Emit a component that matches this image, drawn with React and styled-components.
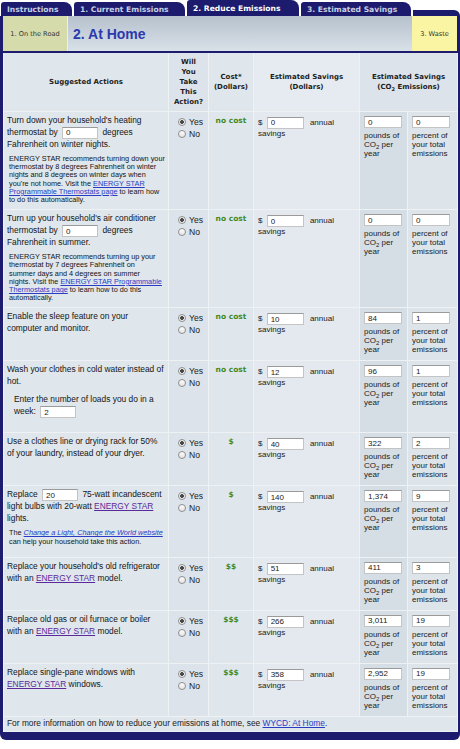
import React from 'react'
import styled, { createGlobalStyle } from 'styled-components'

const NAVY = '#1c1b6e'

const GlobalStyle = createGlobalStyle`
  body {
    margin: 0;
    background: #ffffff;
    font-family: "Liberation Sans", Arial, sans-serif;
  }
`

const tabs = [
  { label: 'Instructions', w: 71 },
  { label: '1. Current Emissions', w: 111 },
  { label: '2. Reduce Emissions', w: 112, active: true },
  { label: '3. Estimated Savings', w: 110 },
]

const rows = [
  { id: 'heat', cost: 'no cost', dollars: '0', pounds: '0', percent: '0' },
  { id: 'ac', cost: 'no cost', dollars: '0', pounds: '0', percent: '0' },
  { id: 'sleep', cost: 'no cost', dollars: '10', pounds: '84', percent: '1' },
  { id: 'wash', cost: 'no cost', dollars: '12', pounds: '96', percent: '1' },
  { id: 'line', cost: '$', dollars: '40', pounds: '322', percent: '2' },
  { id: 'bulbs', cost: '$', dollars: '140', pounds: '1,374', percent: '9' },
  { id: 'fridge', cost: '$$', dollars: '51', pounds: '411', percent: '3' },
  { id: 'furnace', cost: '$$$', dollars: '266', pounds: '3,011', percent: '19' },
  { id: 'windows', cost: '$$$', dollars: '358', pounds: '2,952', percent: '19' },
]

function ActionText({ id }) {
  switch (id) {
    case 'heat':
      return (
        <>
          Turn down your household's heating thermostat by <Field $w={36} defaultValue="0" /> degrees Fahrenheit on winter nights.
          <Note>
            ENERGY STAR recommends turning down your thermostat by 8 degrees Fahrenheit on winter nights and 8 degrees on winter days when you're not home. Visit the <Link href="#">ENERGY STAR Programmable Thermostats page</Link> to learn how to do this automatically.
          </Note>
        </>
      )
    case 'ac':
      return (
        <>
          Turn up your household's air conditioner thermostat by <Field $w={36} defaultValue="0" /> degrees Fahrenheit in summer.
          <Note>
            ENERGY STAR recommends turning up your thermostat by 7 degrees Fahrenheit on<br />
            summer days and 4 degrees on summer<br />
            nights. Visit the <Link href="#">ENERGY STAR Programmable Thermostats page</Link> to learn how to do this automatically.
          </Note>
        </>
      )
    case 'sleep':
      return <>Enable the sleep feature on your computer and monitor.</>
    case 'wash':
      return (
        <>
          Wash your clothes in cold water instead of hot.
          <Indent>
            Enter the number of loads you do in a week: <Field $w={36} defaultValue="2" />
          </Indent>
        </>
      )
    case 'line':
      return <>Use a clothes line or drying rack for 50% of your laundry, instead of your dryer.</>
    case 'bulbs':
      return (
        <>
          Replace <Field $w={36} defaultValue="20" /> 75-watt incandescent light bulbs with 20-watt <Link href="#" $visited>ENERGY STAR</Link> lights.
          <Note $below={6}>
            The <Link href="#" $italic>Change a Light, Change the World website</Link> can help your household take this action.
          </Note>
        </>
      )
    case 'fridge':
      return <>Replace your household's old refrigerator with an <Link href="#" $visited>ENERGY STAR</Link> model.</>
    case 'furnace':
      return <>Replace old gas or oil furnace or boiler with an <Link href="#" $visited>ENERGY STAR</Link> model.</>
    default:
      return <>Replace single-pane windows with <Link href="#" $visited>ENERGY STAR</Link> windows.</>
  }
}

export default function App() {
  return (
    <Page>
      <GlobalStyle />
      <TabBar>
        {tabs.map(t => (
          <Tab key={t.label} $w={t.w} $active={t.active}>{t.label}</Tab>
        ))}
        <TabFill />
      </TabBar>
      <Frame>
        <SubNav>
          <SideStep $tone="#d5dbab">1. On the Road</SideStep>
          <Title>2. At Home</Title>
          <SideStep $tone="#faf5a2" $right>3. Waste</SideStep>
        </SubNav>
        <Table>
          <colgroup>
            <col style={{ width: 165 }} />
            <col style={{ width: 40 }} />
            <col style={{ width: 45 }} />
            <col style={{ width: 106 }} />
            <col style={{ width: 48 }} />
            <col style={{ width: 50 }} />
          </colgroup>
          <thead>
            <tr>
              <Head $tone="#dfe6ec">Suggested Actions</Head>
              <Head $tone="#dce3ea">Will<br />You<br />Take<br />This<br />Action?</Head>
              <Head $tone="#dfe6ec">Cost*<br />(Dollars)</Head>
              <Head $tone="#e5ebf0">Estimated Savings<br />(Dollars)</Head>
              <Head $tone="#dce3ea" colSpan={2}>Estimated Savings<br />(CO<sub>2</sub> Emissions)</Head>
            </tr>
          </thead>
          <tbody>
            {rows.map(r => (
              <tr key={r.id}>
                <ActionCell><ActionText id={r.id} /></ActionCell>
                <Cell $tone="#dce3ea">
                  <Choice><Radio type="radio" name={r.id} defaultChecked />Yes</Choice>
                  <Choice><Radio type="radio" name={r.id} />No</Choice>
                </Cell>
                <CostCell>{r.cost}</CostCell>
                <Cell $tone="#e3e9ee">
                  <Line>$ <Field $w={37} defaultValue={r.dollars} $gap /> annual</Line>
                  savings
                </Cell>
                <Cell $tone="#d5dde5">
                  <Field $w={38} defaultValue={r.pounds} $block />
                  <Small>pounds of<br />CO<sub>2</sub> per<br />year</Small>
                </Cell>
                <Cell $tone="#dde4ea">
                  <Field $w={38} defaultValue={r.percent} $block />
                  <Small>percent of<br />your total<br />emissions</Small>
                </Cell>
              </tr>
            ))}
            <tr>
              <Footer colSpan={6}>
                For more information on how to reduce your emissions at home, see <Link href="#">WYCD: At Home</Link>.
              </Footer>
            </tr>
          </tbody>
        </Table>
      </Frame>
    </Page>
  )
}

const Page = styled.div`
  width: 460px;
`

const TabBar = styled.div`
  display: flex;
  align-items: flex-end;
  gap: 2px;
  height: 16px;
  padding-left: 1px;
`

const Tab = styled.div`
  width: ${p => p.$w}px;
  height: ${p => (p.$active ? 16 : 14)}px;
  box-sizing: border-box;
  padding-left: 6px;
  display: flex;
  align-items: center;
  background: ${NAVY};
  color: ${p => (p.$active ? '#ffffff' : '#c6cee2')};
  border-radius: 3px 8px 0 0;
  font: bold 7.6px "DejaVu Sans", Verdana, sans-serif;
  white-space: nowrap;
`

const TabFill = styled.div`
  flex: 1;
  height: 6px;
  background: ${NAVY};
  border-radius: 0 7px 0 0;
`

const Frame = styled.div`
  border-left: 3px solid ${NAVY};
  border-right: 3px solid ${NAVY};
  border-bottom: 8px solid ${NAVY};
  border-radius: 0 0 6px 6px;
  background: #dfe6ec;
`

const SubNav = styled.div`
  display: flex;
  align-items: stretch;
  height: 35px;
  background: linear-gradient(#b6c1cd, #d9e1e8);
  border-bottom: 2px solid ${NAVY};
`

const SideStep = styled.div`
  width: ${p => (p.$right ? 45 : 64)}px;
  background: ${p => p.$tone};
  display: flex;
  align-items: center;
  justify-content: center;
  font: 6.6px "DejaVu Sans", Verdana, sans-serif;
  color: #333;
  border-right: ${p => (p.$right ? 'none' : '1px solid #eef0dc')};
`

const Title = styled.div`
  flex: 1;
  display: flex;
  align-items: center;
  padding-left: 5px;
  font: bold 14px "Liberation Sans", Arial, sans-serif;
  color: #2c3aad;
`

const Table = styled.table`
  width: 454px;
  table-layout: fixed;
  border-collapse: collapse;
  sub {
    font-size: 6px;
    line-height: 0;
    vertical-align: -2px;
  }
`

const Head = styled.th`
  background: ${p => p.$tone};
  height: 58px;
  padding: 0 2px;
  border: 1px solid #eef2f5;
  border-top: none;
  font: bold 7px/10px "DejaVu Sans", Verdana, sans-serif;
  color: #1e1e1e;
  text-align: center;
  vertical-align: middle;
  sub { font-size: 5px; }
`

const Cell = styled.td`
  background: ${p => p.$tone};
  border: 1px solid #eef2f5;
  padding: 4px 4px 6px;
  vertical-align: top;
  font: 8px/9px "Liberation Sans", Arial, sans-serif;
  color: #222;
`

const ActionCell = styled(Cell)`
  background: #dfe6ec;
  padding: 2px 3px 5px 3px;
  font-size: 8.4px;
  line-height: 12px;
  color: #151515;
`

const CostCell = styled(Cell)`
  background: #dfe6ec;
  text-align: center;
  padding-top: 4px;
  font: bold 7.5px/10px "DejaVu Sans", Verdana, sans-serif;
  color: #3f8a1f;
`

const Footer = styled(Cell)`
  background: #dfe6ec;
  padding: 1px 3px 2px;
  font-size: 8.4px;
  line-height: 11px;
`

const Note = styled.div`
  margin: 5px 0 ${p => p.$below || 0}px;
  padding-left: 2px;
  font-size: 7.3px;
  line-height: 8.2px;
`

const Indent = styled.div`
  margin: 6px 0 10px;
  padding-left: 7px;
`

const Link = styled.a`
  color: ${p => (p.$visited ? '#5b2a9a' : '#2a3cc4')};
  font-style: ${p => (p.$italic ? 'italic' : 'normal')};
  text-decoration: underline;
`

const Field = styled.input`
  display: ${p => (p.$block ? 'block' : 'inline-block')};
  width: ${p => p.$w}px;
  height: 12px;
  box-sizing: border-box;
  margin: ${p => (p.$block ? '0 0 3px' : p.$gap ? '-2px 4px -2px 2px' : '-2px 2px')};
  padding: 0 3px;
  border: 1px solid #c4c4c4;
  border-top-color: #9a9a9a;
  background: #fff;
  font: 8px "Liberation Sans", Arial, sans-serif;
  color: #222;
  vertical-align: middle;
`

const Line = styled.div`
  line-height: 13px;
`

const Small = styled.div`
  line-height: 9px;
`

const Choice = styled.label`
  display: flex;
  align-items: center;
  padding-left: 5px;
  font: 8.6px/12px "Liberation Sans", Arial, sans-serif;
  color: #222;
`

const Radio = styled.input`
  appearance: none;
  width: 8px;
  height: 8px;
  margin: 0 3px 0 0;
  border: 1px solid #8c8c8c;
  border-radius: 50%;
  background: linear-gradient(#fdfdfd, #e4e4e4);
  &:checked {
    background: radial-gradient(circle, #4a4a4a 0 1.6px, #f4f4f4 2.2px);
  }
`
